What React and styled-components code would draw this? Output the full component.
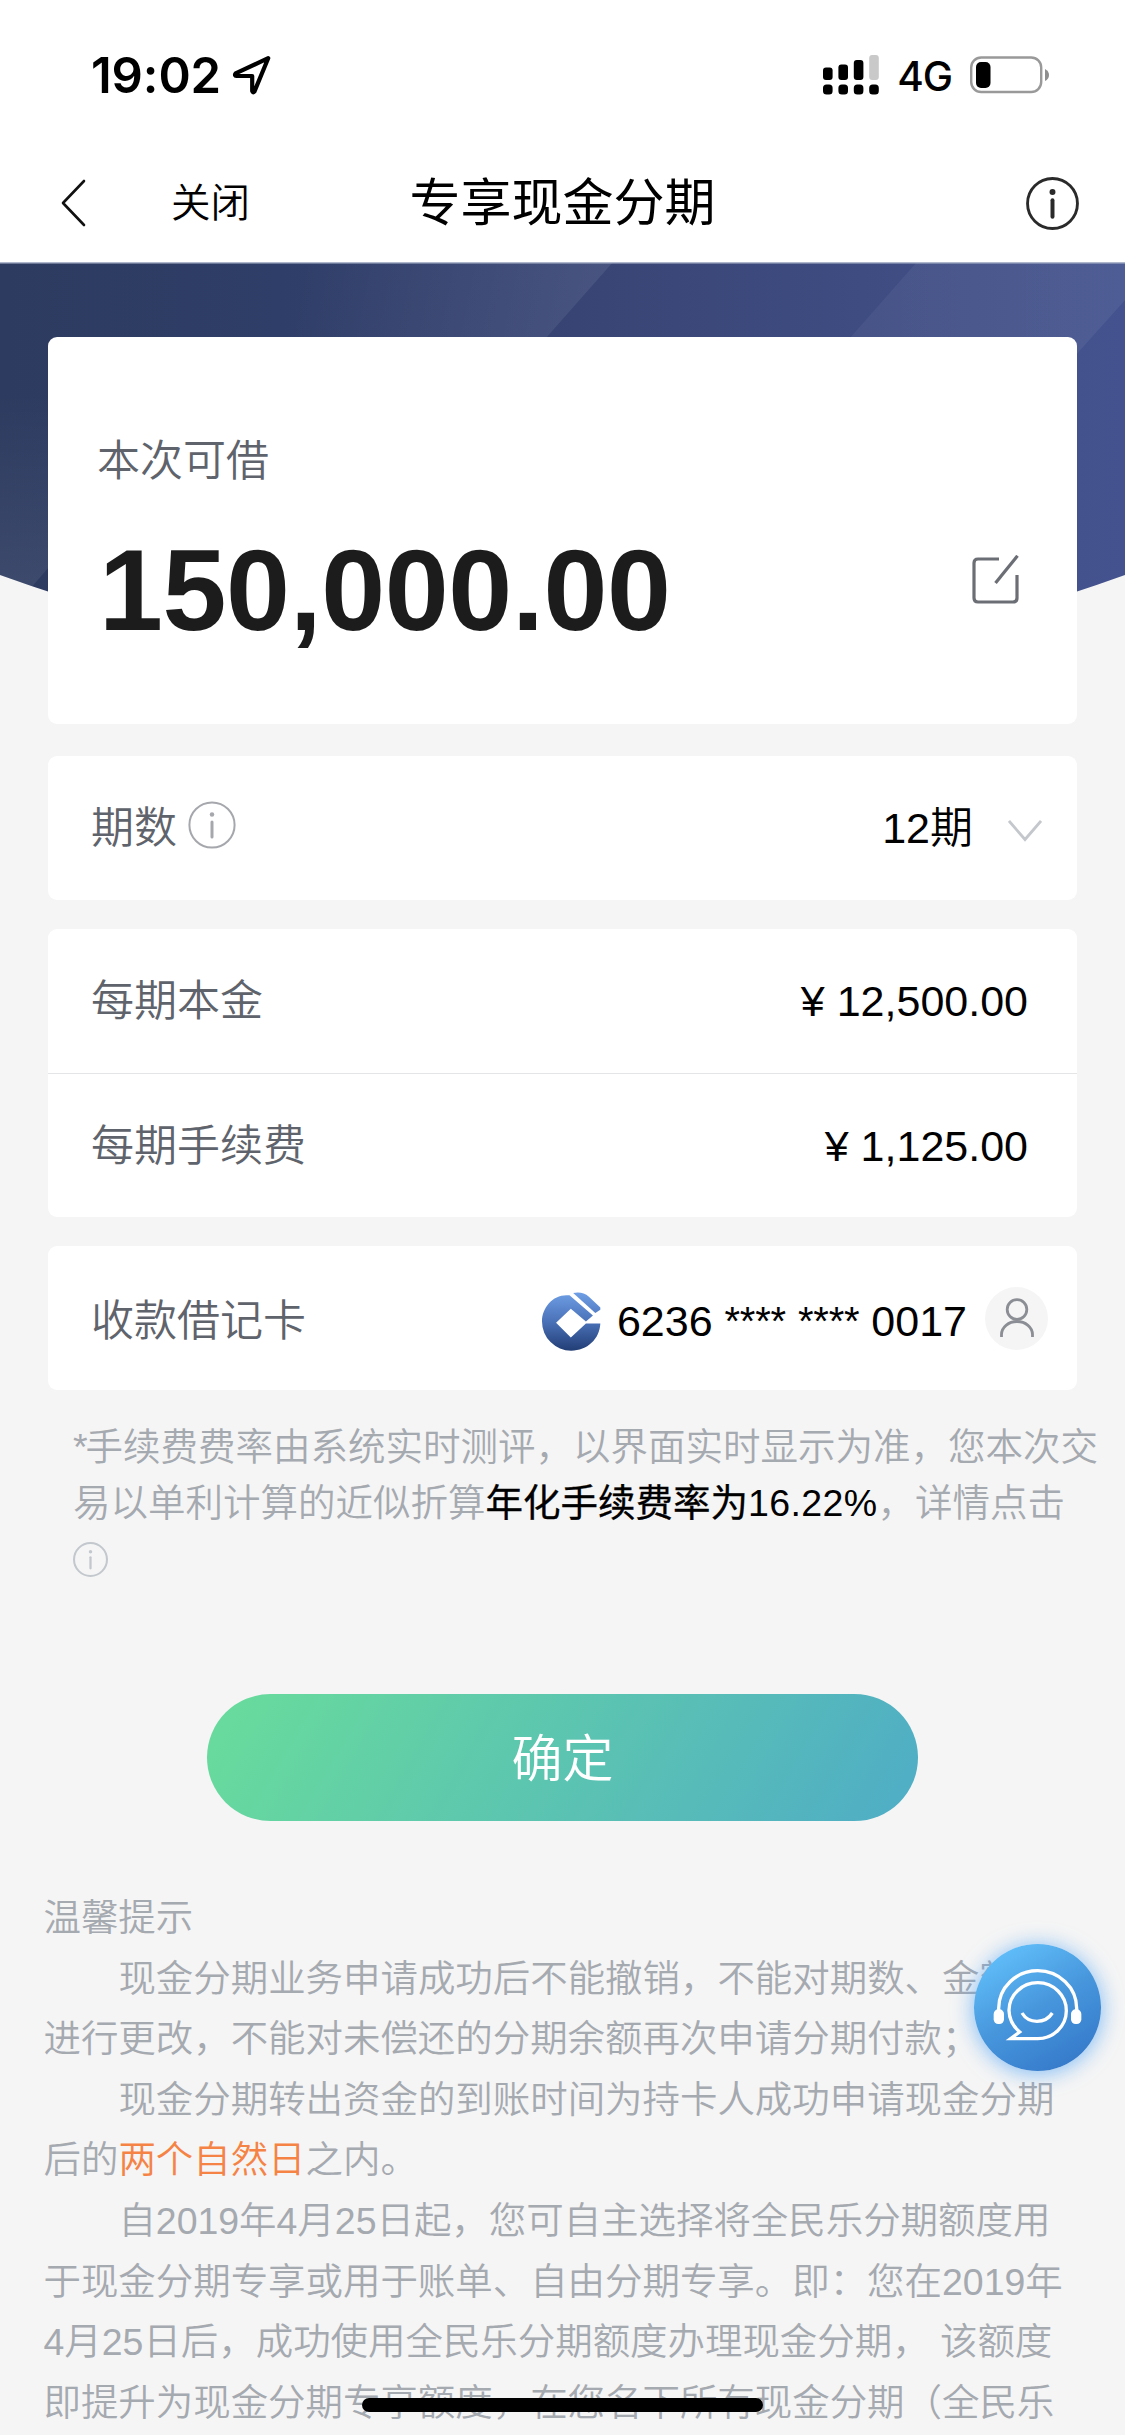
import React from 'react';
import styled, { createGlobalStyle } from 'styled-components';

const GlobalStyle = createGlobalStyle`
  * {
    box-sizing: border-box;
  }
  body {
    margin: 0;
    background: #f5f5f5;
    font-family: "Liberation Sans", "Noto Sans CJK SC", sans-serif;
    font-weight: 350;
  }
  svg {
    display: block;
    flex-shrink: 0;
  }
`;

const tips = [
  { indent: true, text: '现金分期业务申请成功后不能撤销，不能对期数、金额等' },
  { text: '进行更改，不能对未偿还的分期余额再次申请分期付款；' },
  { indent: true, text: '现金分期转出资金的到账时间为持卡人成功申请现金分期' },
  { text: '后的', mark: '两个自然日', rest: '之内。' },
  { indent: true, text: '自2019年4月25日起，您可自主选择将全民乐分期额度用' },
  { text: '于现金分期专享或用于账单、自由分期专享。即：您在2019年' },
  { text: '4月25日后，成功使用全民乐分期额度办理现金分期， 该额度' },
  { text: '即提升为现金分期专享额度，在您名下所有现金分期（全民乐' },
];

function InfoIcon({ size, color, stroke = 2, stem = 3 }) {
  return (
    <svg width={size} height={size} viewBox="0 0 48 48" fill="none" stroke={color} strokeWidth={stroke}>
      <circle cx="24" cy="24" r="22.6" />
      <path d="M24 21V36" strokeWidth={stem} strokeLinecap="round" />
      <circle cx="24" cy="13.5" r={stem * 0.75} fill={color} stroke="none" />
    </svg>
  );
}

function LocationIcon() {
  return (
    <svg width="40" height="40" viewBox="0 0 40 40" fill="none" stroke="#000" strokeWidth="4.2" strokeLinejoin="round">
      <path d="M36.2 3.2L3.6 18.4Q2 20.6 4.6 21H20.2V36Q20.8 38.2 22.4 36.6Z" />
    </svg>
  );
}

function SignalIcon() {
  return (
    <svg width="57" height="40" viewBox="0 0 57 40">
      <rect x="0" y="12.5" width="9.6" height="12.5" rx="3" />
      <rect x="15.4" y="9.5" width="9.6" height="15.5" rx="3" />
      <rect x="30.8" y="5" width="9.6" height="20" rx="3" />
      <rect x="46.2" y="0" width="9.6" height="25" rx="3" fill="#c9c9c9" />
      <rect x="0" y="29.5" width="9.6" height="10" rx="3.5" />
      <rect x="15.4" y="29.5" width="9.6" height="10" rx="3.5" />
      <rect x="30.8" y="29.5" width="9.6" height="10" rx="3.5" />
      <rect x="46.2" y="29.5" width="9.6" height="10" rx="3.5" />
    </svg>
  );
}

function BatteryIcon() {
  return (
    <svg width="80" height="38" viewBox="0 0 80 38">
      <rect x="1.2" y="1.5" width="70" height="34.5" rx="10" fill="none" stroke="#999" strokeWidth="2.4" />
      <rect x="6" y="6" width="14.5" height="26" rx="5" />
      <path d="M75 13Q79 15 79 19Q79 23 75 25Z" fill="#8e8e8e" />
    </svg>
  );
}

function EditIcon() {
  return (
    <svg width="48" height="50" viewBox="0 0 48 50" fill="none" stroke="#6b6e75" strokeWidth="3.2">
      <path d="M27 4H6Q2 4 2 8V43Q2 47 6 47H41Q45 47 45 43V20" />
      <path d="M45.5 .8L23.5 28" />
    </svg>
  );
}

function BankLogo() {
  return (
    <svg width="59" height="59" viewBox="66 68 176 176">
      <defs>
        <linearGradient id="bank" x1="0" y1="68" x2="0" y2="244" gradientUnits="userSpaceOnUse">
          <stop offset="0" stopColor="#6f9fe6" />
          <stop offset=".5" stopColor="#4a72b8" />
          <stop offset="1" stopColor="#223d75" />
        </linearGradient>
      </defs>
      <g fill="url(#bank)">
        <path d="M148 78L218 138L197 156L152 118L108 160L152 204L197 162H240C238 208 201 243 153 243A87 87 0 0 1 66 156C66 112 102 72 148 78Z" />
        <path d="M159 71Q186 65 206 82L240 114V121L225 131Z" />
      </g>
    </svg>
  );
}

function UserIcon() {
  return (
    <svg width="34" height="40" viewBox="0 0 34 40" fill="none" stroke="#8b8e94" strokeWidth="2.8">
      <circle cx="17" cy="11.5" r="9.8" />
      <path d="M1.5 39V36.500A15.500 13 0 0 1 32.500 36.500V39" />
    </svg>
  );
}

function ServiceIcon() {
  return (
    <svg width="127" height="127" viewBox="101 133 381 381" fill="none" stroke="#fff" strokeWidth="10">
      <path d="M175 338V326A117 113 0 0 1 409 326V338" />
      <path d="M211 417H292A86 84 0 1 0 206 332Q207 370 238 397Z" />
      <path d="M245 340Q260 365 290 365Q320 365 336 340" />
      <g fill="#fff" stroke="none">
        <rect x="160" y="329" width="31" height="44" rx="14" />
        <rect x="392" y="329" width="31" height="44" rx="14" />
      </g>
    </svg>
  );
}

function HeroArt() {
  return (
    <svg width="1125" height="400" viewBox="0 0 1125 400">
      <defs>
        <linearGradient id="base">
          <stop offset="0" stopColor="#2d3b60" />
          <stop offset=".25" stopColor="#2f3e68" />
          <stop offset=".6" stopColor="#3b4778" />
          <stop offset="1" stopColor="#44538f" />
        </linearGradient>
        <linearGradient id="beam" x1="300" y1="0" x2="600" y2="60" gradientUnits="userSpaceOnUse">
          <stop offset="0" stopColor="#fff" stopOpacity="0" />
          <stop offset="1" stopColor="#fff" stopOpacity=".08" />
        </linearGradient>
        <linearGradient id="beamRight">
          <stop offset="0" stopColor="#fff" stopOpacity=".04" />
          <stop offset="1" stopColor="#fff" stopOpacity=".06" />
        </linearGradient>
        <linearGradient id="corner" x1="0" y1="0" x2="0" y2="1">
          <stop offset="0" stopColor="#fff" stopOpacity="0" />
          <stop offset="1" stopColor="#fff" stopOpacity=".08" />
        </linearGradient>
        <clipPath id="curve">
          <path d="M0 0H1125V313Q562 516 0 313Z" />
        </clipPath>
      </defs>
      <g clipPath="url(#curve)">
        <rect width="1125" height="400" fill="url(#base)" />
        <path d="M0 0H613L260 400H0Z" fill="url(#beam)" />
        <path d="M917 0H1125V38L1000 178H760Z" fill="url(#beamRight)" />
        <path d="M0 130H200L30 327L0 340Z" fill="url(#corner)" />
      </g>
      <rect width="1125" height="1.500" fill="#aeb7cc" />
    </svg>
  );
}

export default function App() {
  return (
    <Page>
      <GlobalStyle />
      <StatusBar>
        <Clock>19:02</Clock>
        <LocationIcon />
        <StatusRight>
          <SignalIcon />
          <Network>4G</Network>
          <BatteryIcon />
        </StatusRight>
      </StatusBar>

      <NavBar>
        <NavLeft>
          <svg width="26" height="48" viewBox="0 0 26 48" fill="none" stroke="#111" strokeWidth="2.6" strokeLinecap="round" strokeLinejoin="round">
            <path d="M23 2L2 24L23 46" />
          </svg>
          <Close>关闭</Close>
        </NavLeft>
        <Title>专享现金分期</Title>
        <NavRight>
          <InfoIcon size={53} color="#2a2a2a" stroke={2.6} stem={3.6} />
        </NavRight>
      </NavBar>

      <HeroArt />

      <Cards>
        <AmountCard>
          <AmountLabel>本次可借</AmountLabel>
          <AmountRow>
            <Amount>150,000.00</Amount>
            <Edit>
              <EditIcon />
            </Edit>
          </AmountRow>
        </AmountCard>

        <Card>
          <Row $right={35}>
            <Label>期数</Label>
            <TermInfo>
              <InfoIcon size={48} color="#a5a7ac" />
            </TermInfo>
            <Value $gap={35}>
              12期
              <Arrow width="34" height="22" viewBox="0 0 34 22" fill="none" stroke="#c4c7cc" strokeWidth="2.8">
                <path d="M1 1L17 19.500L33 1" />
              </Arrow>
            </Value>
          </Row>
        </Card>

        <Card>
          <Row $right={49}>
            <Label>每期本金</Label>
            <Value>¥ 12,500.00</Value>
          </Row>
          <Row $line $right={49}>
            <Label>每期手续费</Label>
            <Value>¥ 1,125.00</Value>
          </Row>
        </Card>

        <CardRow>
          <Label>收款借记卡</Label>
          <Value $gap={16}>
            <BankLogo />
            <CardNumber>
              6236 <Stars>****</Stars> <Stars>****</Stars> 0017
            </CardNumber>
          </Value>
          <Avatar>
            <UserIcon />
          </Avatar>
        </CardRow>
      </Cards>

      <Note>
        <div>
          <Asterisk>*</Asterisk>手续费费率由系统实时测评，以界面实时显示为准，您本次交
        </div>
        <div>
          易以单利计算的近似折算<Strong>年化手续费率为</Strong>
          <Rate>16.22%</Rate>，详情点击
        </div>
        <NoteInfo>
          <InfoIcon size={35} color="#c3c8ce" stroke={2.8} stem={3.2} />
        </NoteInfo>
      </Note>

      <Submit>确定</Submit>

      <Tips>
        <Tip>温馨提示</Tip>
        {tips.map((tip) => (
          <Tip key={tip.text} $indent={tip.indent}>
            {tip.text}
            {tip.mark && <Mark>{tip.mark}</Mark>}
            {tip.rest}
          </Tip>
        ))}
      </Tips>

      <ServiceButton>
        <ServiceIcon />
      </ServiceButton>
      <HomeIndicator />
    </Page>
  );
}

const Page = styled.div`
  position: relative;
  width: 1125px;
  height: 2435px;
  overflow: hidden;
  background: #f5f5f5;
  color: #000;
`;

const StatusBar = styled.header`
  display: flex;
  align-items: center;
  height: 150px;
  padding: 0 75px 0 91px;
  background: #fff;
`;

const Clock = styled.span`
  width: 141px;
  font-family: Inter, sans-serif;
  font-size: 49px;
  font-weight: 600;
  letter-spacing: -0.1px;
`;

const StatusRight = styled.div`
  display: flex;
  align-items: center;
  margin-left: auto;
`;

const Network = styled.span`
  margin: 2px 18px 0 17px;
  font-family: Inter, sans-serif;
  font-size: 40.500px;
  font-weight: 500;
  letter-spacing: -1px;
`;

const NavBar = styled.nav`
  display: grid;
  grid-template-columns: 1fr auto 1fr;
  align-items: center;
  height: 112px;
  padding: 0 46px 6px;
  background: #fff;
`;

const NavLeft = styled.div`
  display: flex;
  align-items: center;
  padding-left: 15px;
`;

const NavRight = styled.div`
  display: flex;
  justify-content: flex-end;
`;

const Close = styled.span`
  margin-left: 84px;
  font-size: 39.500px;
  line-height: 50px;
`;

const Title = styled.h1`
  margin: 0;
  padding-top: 2px;
  font-size: 51px;
  font-weight: 400;
  line-height: 60px;
`;

const Cards = styled.main`
  position: relative;
  display: flex;
  flex-direction: column;
  gap: 29px;
  margin-top: -325px;
  padding: 0 48px;
`;

const Card = styled.section`
  border-radius: 9px;
  background: #fff;
`;

const AmountCard = styled(Card)`
  height: 387px;
  margin-bottom: 3px;
  padding: 92px 57px 0 49px;
`;

const AmountLabel = styled.div`
  color: #5f646c;
  font-size: 43px;
  line-height: 64px;
`;

const AmountRow = styled.div`
  display: flex;
  justify-content: space-between;
  padding: 31px 0 0 2px;
`;

const Amount = styled.strong`
  color: #1c1c1c;
  font-size: 115px;
  letter-spacing: -0.4px;
  line-height: 132px;
`;

const Edit = styled.div`
  padding-top: 31px;
`;

const Row = styled.div`
  display: flex;
  align-items: center;
  height: 144px;
  padding: 0 ${(props) => props.$right}px 0 43px;
  border-top: ${(props) => (props.$line ? '1px solid #e4e5e7' : 'none')};
`;

const Label = styled.span`
  margin-right: 11px;
  color: #5f646c;
  font-size: 43px;
  line-height: 60px;
`;

const TermInfo = styled.span`
  margin-bottom: 6px;
`;

const Arrow = styled.svg`
  margin-top: 5px;
`;

const Value = styled.div`
  display: flex;
  align-items: center;
  gap: ${(props) => props.$gap || 0}px;
  margin-left: auto;
  font-size: 43px;
  line-height: 60px;
`;

const CardRow = styled(Card)`
  display: flex;
  align-items: center;
  height: 144px;
  padding: 0 29px 0 43px;

  ${Label}, ${Value} {
    padding-top: 6px;
  }
`;

const CardNumber = styled.span`
  white-space: nowrap;
`;

const Stars = styled.span`
  font-size: 40px;
  letter-spacing: -0.2px;
  line-height: 1;
  vertical-align: 1px;
`;

const Avatar = styled.span`
  display: flex;
  align-items: center;
  justify-content: center;
  width: 63px;
  height: 63px;
  margin-left: 18px;
  border-radius: 50%;
  background: #f5f5f5;
`;

const Note = styled.div`
  margin-top: 29px;
  padding-left: 73px;
  color: #a5a9b0;
  font-size: 37.500px;
  line-height: 56px;
  white-space: nowrap;
`;

const Asterisk = styled.span`
  letter-spacing: -2px;
`;

const Strong = styled.span`
  color: #000;
  font-weight: 400;
  -webkit-text-stroke: 0.3px #000;
`;

const Rate = styled.span`
  color: #000;
  letter-spacing: 0.4px;
`;

const NoteInfo = styled.div`
  display: flex;
  align-items: center;
  height: 56px;
`;

const Submit = styled.button`
  display: block;
  width: 711px;
  height: 127px;
  margin: 107px auto 0;
  padding: 4px 0 0;
  border: 0;
  border-radius: 64px;
  background: linear-gradient(120deg, #68da9d 5%, #50afc4 95%);
  color: #fff;
  font-family: inherit;
  font-size: 51px;
  font-weight: inherit;
  line-height: 123px;
`;

const Tips = styled.div`
  margin-top: 67px;
  padding-left: 43.500px;
  color: #a5a9b0;
  font-size: 37.450px;
  line-height: 60.600px;
  white-space: nowrap;
`;

const Tip = styled.p`
  margin: 0;
  text-indent: ${(props) => (props.$indent ? '2em' : 0)};
`;

const Mark = styled.span`
  color: #f58345;
`;

const ServiceButton = styled.div`
  position: absolute;
  top: 1944px;
  left: 974px;
  width: 127px;
  height: 127px;
  border-radius: 50%;
  background: linear-gradient(150deg, #62c1fb 8%, #4796dc 50%, #3478c9 92%);
  box-shadow: 0 2px 20px 2px rgba(86, 166, 245, 0.65);
`;

const HomeIndicator = styled.div`
  position: absolute;
  bottom: 23px;
  left: 362px;
  width: 401px;
  height: 14px;
  border-radius: 7px;
  background: #000;
`;
